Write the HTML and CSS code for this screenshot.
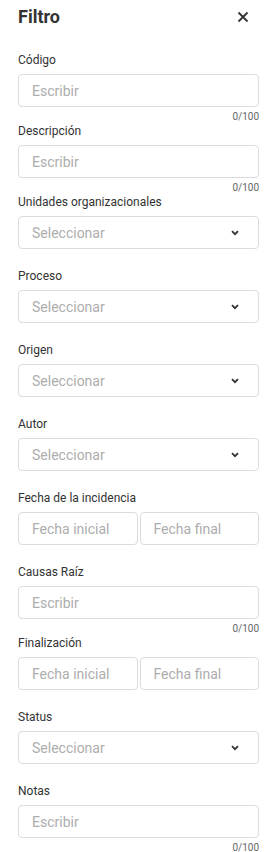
FILE: index.html
```html
<!DOCTYPE html>
<html>

<head>
    <meta charset="UTF-8" />
    <title>Filtro</title>
    <link rel="stylesheet" href="styles.css">
</head>

<body>
    <div class="panel">
        <header class="panel-header">
            <span class="panel-title">Filtro</span>
            <button class="close-btn" type="button">
                <svg width="12" height="12" viewBox="0 0 12 12">
                    <path d="M1.5 1.5L10.5 10.5M10.5 1.5L1.5 10.5" stroke="#333" stroke-width="1.8" fill="none" />
                </svg>
            </button>
        </header>

        <div class="field">
            <label class="field-label">Código</label>
            <input class="text-input" type="text" placeholder="Escribir">
            <div class="counter">0/100</div>
        </div>

        <div class="field">
            <label class="field-label">Descripción</label>
            <input class="text-input" type="text" placeholder="Escribir">
            <div class="counter">0/100</div>
        </div>

        <div class="field field-spaced">
            <label class="field-label">Unidades organizacionales</label>
            <div class="select">
                <span>Seleccionar</span>
                <svg class="chevron" width="8" height="6" viewBox="0 0 8 6">
                    <path d="M1 1.2L4 4.2L7 1.2" stroke="#333" stroke-width="1.8" fill="none" />
                </svg>
            </div>
        </div>

        <div class="field field-spaced">
            <label class="field-label">Proceso</label>
            <div class="select">
                <span>Seleccionar</span>
                <svg class="chevron" width="8" height="6" viewBox="0 0 8 6">
                    <path d="M1 1.2L4 4.2L7 1.2" stroke="#333" stroke-width="1.8" fill="none" />
                </svg>
            </div>
        </div>

        <div class="field field-spaced">
            <label class="field-label">Origen</label>
            <div class="select">
                <span>Seleccionar</span>
                <svg class="chevron" width="8" height="6" viewBox="0 0 8 6">
                    <path d="M1 1.2L4 4.2L7 1.2" stroke="#333" stroke-width="1.8" fill="none" />
                </svg>
            </div>
        </div>

        <div class="field field-spaced">
            <label class="field-label">Autor</label>
            <div class="select">
                <span>Seleccionar</span>
                <svg class="chevron" width="8" height="6" viewBox="0 0 8 6">
                    <path d="M1 1.2L4 4.2L7 1.2" stroke="#333" stroke-width="1.8" fill="none" />
                </svg>
            </div>
        </div>

        <div class="field field-spaced">
            <label class="field-label">Fecha de la incidencia</label>
            <div class="date-range">
                <input class="text-input" type="text" placeholder="Fecha inicial">
                <input class="text-input" type="text" placeholder="Fecha final">
            </div>
        </div>

        <div class="field">
            <label class="field-label">Causas Raíz</label>
            <input class="text-input" type="text" placeholder="Escribir">
            <div class="counter">0/100</div>
        </div>

        <div class="field field-spaced">
            <label class="field-label">Finalización</label>
            <div class="date-range">
                <input class="text-input" type="text" placeholder="Fecha inicial">
                <input class="text-input" type="text" placeholder="Fecha final">
            </div>
        </div>

        <div class="field field-spaced">
            <label class="field-label">Status</label>
            <div class="select">
                <span>Seleccionar</span>
                <svg class="chevron" width="8" height="6" viewBox="0 0 8 6">
                    <path d="M1 1.2L4 4.2L7 1.2" stroke="#333" stroke-width="1.8" fill="none" />
                </svg>
            </div>
        </div>

        <div class="field">
            <label class="field-label">Notas</label>
            <input class="text-input" type="text" placeholder="Escribir">
            <div class="counter">0/100</div>
        </div>
    </div>
</body>

</html>
```

FILE: styles.css
```css
* {
    box-sizing: border-box;
}

body {
    margin: 0;
    background-color: white;
    font-family: Roboto, "Liberation Sans", sans-serif;
    color: #333;
}

.panel {
    padding: 5px 18px 0 18px;
}

.panel-header {
    display: flex;
    justify-content: space-between;
    align-items: center;
    height: 24px;
    margin-bottom: 23px;
}

.panel-title {
    font-size: 18px;
    font-weight: bold;
    line-height: 24px;
    color: #333;
}

.close-btn {
    display: flex;
    padding: 0;
    margin-right: 10px;
    border: none;
    background: none;
    cursor: pointer;
}

.field {
    display: flex;
    flex-direction: column;
}

.field-spaced {
    margin-bottom: 19px;
}

.field-label {
    font-size: 12px;
    line-height: 16px;
    margin-bottom: 6px;
    color: #333;
}

.text-input,
.select {
    width: 100%;
    height: 33px;
    padding: 0 13px;
    border: 1px solid #dcdcdc;
    border-radius: 4px;
    font-family: Roboto, "Liberation Sans", sans-serif;
    font-size: 14px;
    color: #333;
    background-color: white;
}

.text-input::placeholder {
    color: #adadad;
}

.select {
    display: flex;
    justify-content: space-between;
    align-items: center;
    color: #adadad;
    padding-right: 19px;
}

.date-range {
    display: flex;
    gap: 2px;
}

.date-range .text-input {
    flex: 1;
    min-width: 0;
}

.counter {
    margin-top: 4px;
    font-size: 10px;
    line-height: 12px;
    text-align: right;
    color: #666;
}
```
